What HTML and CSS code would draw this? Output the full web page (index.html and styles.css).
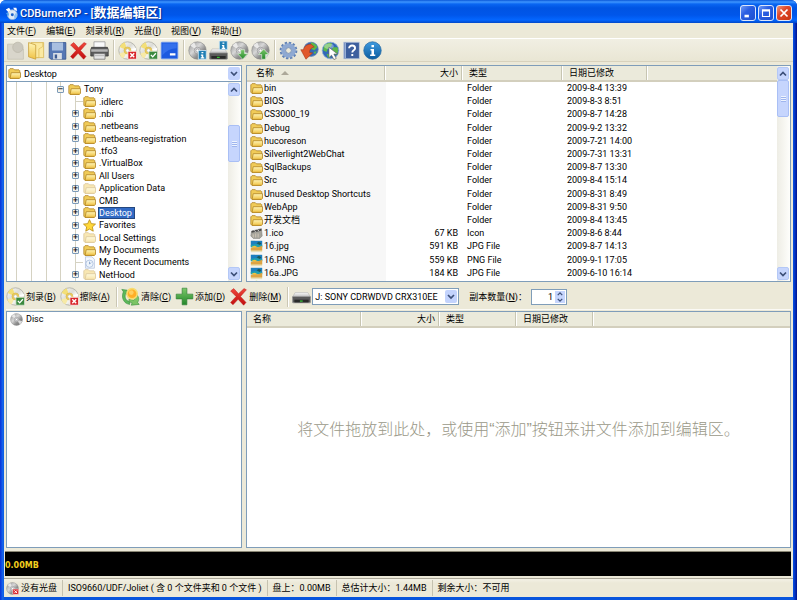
FILE: index.html
```
<!DOCTYPE html>
<html lang="zh-CN">
<head>
<meta charset="UTF-8">
<meta name="viewport" content="width=device-width, initial-scale=1.0">
<title>CDBurnerXP</title>
<link rel="stylesheet" href="styles.css">
</head>
<body>
<svg class="sprite" width="0" height="0" aria-hidden="true">
    <defs>
        <linearGradient id="g-folder" x1="0" y1="0" x2="0" y2="1"><stop offset="0" stop-color="#fff6b8"/><stop offset="1" stop-color="#f0c244"/></linearGradient>
        <linearGradient id="g-disc" x1="0" y1="0" x2="1" y2="1"><stop offset="0" stop-color="#ffffff"/><stop offset=".45" stop-color="#dcdcd6"/><stop offset=".6" stop-color="#f4f4f0"/><stop offset="1" stop-color="#c2c2ba"/></linearGradient>
        <linearGradient id="g-dark" x1="0" y1="0" x2="1" y2="1"><stop offset="0" stop-color="#8c8c8c"/><stop offset=".4" stop-color="#d8d8d8"/><stop offset=".65" stop-color="#8f8f8f"/><stop offset="1" stop-color="#6f6f6f"/></linearGradient>
        <linearGradient id="g-red" x1="0" y1="0" x2="0" y2="1"><stop offset="0" stop-color="#f0483c"/><stop offset="1" stop-color="#c00c0c"/></linearGradient>
        <linearGradient id="g-green" x1="0" y1="0" x2="0" y2="1"><stop offset="0" stop-color="#7cc96a"/><stop offset="1" stop-color="#23862a"/></linearGradient>
        <linearGradient id="g-drive" x1="0" y1="0" x2="0" y2="1"><stop offset="0" stop-color="#fafafa"/><stop offset="1" stop-color="#b5b5b5"/></linearGradient>
        <linearGradient id="g-blue" x1="0" y1="0" x2="0" y2="1"><stop offset="0" stop-color="#3f9be0"/><stop offset="1" stop-color="#0b5c9e"/></linearGradient>
    </defs>
    <symbol id="folder" viewBox="0 0 16 16">
        <path d="M1 12.500V3.500l1.500-1.500h4L8 3.500h5.500l1 1v8l-1 1.500h-11z" fill="#f0cb58" stroke="#a87c1c" stroke-width=".9"/>
        <path d="M2.500 14 4 7h11.400v5.700L14 14z" fill="url(#g-folder)" stroke="#ad801f" stroke-width=".9"/>
    </symbol>
    <symbol id="recent" viewBox="0 0 16 16">
        <path d="M3 1h8l3 3v11H3z" fill="#f4f8ff" stroke="#b5c4dc"/>
        <circle cx="8" cy="9.500" r="4.500" fill="#eef4fc" stroke="#a9bedb"/>
        <path d="M8 7v3l2-2" fill="none" stroke="#7f9cc4"/>
    </symbol>
    <symbol id="star" viewBox="0 0 16 16">
        <path d="M8 .8l2.200 4.900 5.200.6-3.900 3.500 1.100 5.200L8 12.400 3.400 15l1.100-5.200L.6 6.300l5.200-.6z" fill="#ffd83a" stroke="#b98a10"/>
    </symbol>
    <symbol id="picture" viewBox="0 0 16 16">
        <path fill="#e8e0b8" d="M1 1h14v14H1z"/>
        <path fill="#1d7fc0" d="M1 1h14v7H1z"/>
        <path fill="#1f9fb0" d="M1 6l6-1 8 1v3H1z"/>
        <path fill="#dda443" d="M1 10l4-1.500 5 .5 5-2v6H1z"/>
        <path fill="#1a5a5a" d="M8 4l3-2 3 2-2 2z"/>
        <path fill="#f0c53c" d="M2 8l4-1 3 1.500-4 1z"/>
    </symbol>
    <symbol id="clapper" viewBox="0 0 16 16">
        <path d="M2 5 14 2l1 9-3 3H4L1 11z" fill="#a5a49c" stroke="#7d7d78" stroke-width=".7"/>
        <path d="M2 5 14 2v2.500L2 7z" fill="#4a4a4a"/>
        <path d="M5 4l2 2M9 3l2 2" stroke="#eee"/>
        <path d="M4 13V9M7 13V8M10 13V8" stroke="#d8cdbb" fill="none"/>
    </symbol>
    <symbol id="disc" viewBox="0 0 24 24">
        <circle cx="12" cy="12" r="11" fill="url(#g-disc)" stroke="#a5a59c" stroke-width=".9"/>
        <path d="M12 12 2 7.500A11 11 0 0 1 8.500 1.600zM12 12l10.800 1A11 11 0 0 1 20 19.500z" fill="#f3df78"/>
        <path d="M12 12 7 22a11 11 0 0 1-5.500-6z" fill="#f7eaa6"/>
        <path d="M12 12 22.500 8.500 23 12z" fill="#fff"/>
        <circle cx="12" cy="12" r="4.400" fill="#f0cf58" stroke="#cfae4c" stroke-width=".7"/>
        <circle cx="12" cy="12" r="2.100" fill="#fff" stroke="#aaa" stroke-width=".6"/>
    </symbol>
    <symbol id="disc-dark" viewBox="0 0 24 24">
        <circle cx="12" cy="12" r="11" fill="url(#g-dark)" stroke="#888" stroke-width=".8"/>
        <path d="M12 12 3 6a11 11 0 0 1 5-4z" fill="#e9e9e9"/>
        <path d="M12 12l10.500 3a11 11 0 0 1-4 6z" fill="#dcdcdc"/>
        <circle cx="12" cy="12" r="4.200" fill="#cfcfd2" stroke="#8a8a8a" stroke-width=".7"/>
        <circle cx="12" cy="12" r="1.900" fill="#fff" stroke="#777" stroke-width=".6"/>
    </symbol>
    <symbol id="badge-x" viewBox="0 0 24 24">
        <rect x="12.500" y="13" width="11" height="10" rx="1" fill="#d8242a" stroke="#fff" stroke-width="1"/>
        <path d="M15.500 15.500l5 5m0-5-5 5" stroke="#fff" stroke-width="1.800"/>
    </symbol>
    <symbol id="badge-ok" viewBox="0 0 24 24">
        <rect x="12.500" y="13" width="11" height="10" rx="1" fill="#3b8a3f" stroke="#dfe8dc" stroke-width="1"/>
        <path d="M15 17.500l2.300 2.500 4-4.500" fill="none" stroke="#fff" stroke-width="1.700"/>
    </symbol>
    <symbol id="badge-i" viewBox="0 0 24 24">
        <rect x="13" y="12" width="10" height="11" fill="#1f7fb4" stroke="#cfe6f4" stroke-width="1"/>
        <path d="M17 14h2.400v1.600H17zM16.300 17h3v3.500h1.200V22h-4.400v-1.500h1.200v-2h-1z" fill="#fff"/>
    </symbol>
    <symbol id="new" viewBox="0 0 24 24">
        <path d="M2 4h12l8 6v13H2z" fill="#d9d6cb" stroke="#c6c2b4"/>
        <circle cx="15" cy="8" r="6.500" fill="#cbc8bd" stroke="#bdb9ab"/>
    </symbol>
    <symbol id="open" viewBox="0 0 24 24">
        <path d="M5 2h16v19H8z" fill="#fbe9a0" stroke="#d8b654"/>
        <path d="M2 2l9 3v18l-9-3z" fill="url(#g-folder)" stroke="#c99f3a"/>
        <path d="M11 21h4V10l5-3V2" fill="none" stroke="#e0c060"/>
    </symbol>
    <symbol id="save" viewBox="0 0 24 24">
        <path d="M1.500 2h21v21h-19l-2-2z" fill="#5677b4" stroke="#31508c"/>
        <path d="M5 2h14v10H5z" fill="#a9bfe0"/>
        <path d="M6.500 15h11v8h-11z" fill="#d8dde6"/>
        <path d="M8.500 17h3v5h-3z" fill="#3c5a92"/>
    </symbol>
    <symbol id="cross" viewBox="0 0 24 24">
        <path d="M2 5l4-3 6 6.500L19 2l3 1.500L14.500 12l7 7.500-3 3.500-7-7.500-6.500 7L2 19.500 9 12z" fill="url(#g-red)" stroke="#b81a1a" stroke-width=".6"/>
    </symbol>
    <symbol id="printer" viewBox="0 0 24 24">
        <path d="M5 1h14v9H5z" fill="#fafafa" stroke="#999"/>
        <path d="M2 8h20l1 3v8H1v-8z" fill="#5a5a5a" stroke="#3c3c3c"/>
        <path d="M1.500 10.500h21v3h-21z" fill="#b4b4b4"/>
        <path d="M5 16h14v7H5z" fill="#e6e6e6" stroke="#777"/>
        <path d="M6 18.500h12" stroke="#aaa"/>
    </symbol>
    <symbol id="panel" viewBox="0 0 24 24">
        <rect x="1.500" y="1.500" width="21" height="21" rx="1" fill="#1c5ae0" stroke="#6e9aee"/>
        <path d="M3 3h18v6C14 9 8 12 3 18z" fill="#3470ec"/>
        <path d="M12.500 15.500h7v2.800h-7z" fill="#fff"/>
    </symbol>
    <symbol id="drive" viewBox="0 0 24 24">
        <path d="M4 7h16l3.500 6H.5z" fill="url(#g-drive)" stroke="#aaa" stroke-width=".6"/>
        <rect x=".5" y="12" width="23" height="8" rx="1" fill="#5a5a5a" stroke="#9d9d9d"/>
        <path d="M3 16h18v3.500H3z" fill="#292929"/>
        <path d="M10 17.800h3.500" stroke="#36c436" stroke-width="1.600"/>
    </symbol>
    <symbol id="arrow-down" viewBox="0 0 24 24">
        <path d="M13.500 11h5v5h4l-6.500 7-6.500-7h4z" fill="url(#g-green)" stroke="#e8f4e2" stroke-width=".8"/>
    </symbol>
    <symbol id="arrow-up" viewBox="0 0 24 24">
        <path d="M13.500 23h5v-6h4L16 10l-6.500 7h4z" fill="url(#g-green)" stroke="#e8f4e2" stroke-width=".8"/>
    </symbol>
    <symbol id="gear" viewBox="0 0 24 24">
        <circle cx="12" cy="12" r="9.700" fill="none" stroke="#6182b5" stroke-width="3" stroke-dasharray="3.050 2.030"/>
        <circle cx="12" cy="12" r="6.500" fill="none" stroke="#8ea9d2" stroke-width="5.500"/>
        <circle cx="12" cy="12" r="3.600" fill="#ece9d8" stroke="#5c7db0"/>
    </symbol>
    <symbol id="globe" viewBox="0 0 24 24">
        <circle cx="12" cy="12" r="10.500" fill="#3268b8" stroke="#8fb0d8"/>
        <path d="M5 5c3-3 7-3 9-2l-1 4-4 2-2 5-4-2c0-3 0-5 2-7zM15 8l6 0c1 4 1 7-2 10l-4-3-1-4zM7 16l4 1 1 4-3 0z" fill="#5cb84a"/>
        <ellipse cx="10" cy="6.500" rx="6" ry="3.500" fill="#fff" opacity=".35"/>
    </symbol>
    <symbol id="update" viewBox="0 0 24 24">
        <circle cx="14" cy="10.500" r="9" fill="#3268b8" stroke="#6386b8"/>
        <path d="M14 2c4 0 7 3 8 6l-4 4-5-3zM17 14l4-1-2 4z" fill="#5cb84a"/>
        <path d="M14 4C8 4 5 7 4.500 11L1 11l6.500 12L16 15l-4-.5c0-4 2-6 6-7z" fill="#e0582a" stroke="#a43410" stroke-width=".7"/>
    </symbol>
    <symbol id="cursor" viewBox="0 0 24 24">
        <path d="M10 8l0 13 3.300-3 3 5.500 3-1.500-3-5.500h4.700z" fill="#fff" stroke="#555" stroke-width=".8"/>
    </symbol>
    <symbol id="help" viewBox="0 0 24 24">
        <path d="M2 1.500h20v21H2z" fill="#3d5f9e" stroke="#c9d3e4"/>
        <path d="M3 2.500h2v19H3z" fill="#9db3d8"/>
        <path d="M9 9.300c0-5 7.500-4.500 7.500-.3 0 2.800-3.500 2.800-3.500 5.500M13 16.500V19" fill="none" stroke="#fff" stroke-width="2.400"/>
    </symbol>
    <symbol id="info" viewBox="0 0 24 24">
        <circle cx="12" cy="12" r="11" fill="url(#g-blue)" stroke="#2a6da6"/>
        <path d="M10.700 5h3.200v2.800h-3.200zM9.500 10h4.400v7h1.600v2H9v-2h1.700v-5H9.500z" fill="#fff"/>
    </symbol>
    <symbol id="clear" viewBox="0 0 24 24">
        <path d="M1 3l7 1v6l-2-2c-2 5 0 9 5 11v3C3 21 0 13 3 6z" fill="#5cb85a" stroke="#2f8a39" stroke-width=".7"/>
        <path d="M23 22l-10 1 1-3-4-1.500v-3l6 1c3-2 4-4 4-7 3 4 3 7 1 10z" fill="#7cc465" stroke="#2f8a39" stroke-width=".7"/>
        <circle cx="14" cy="8.500" r="6.500" fill="#ffae26" stroke="#f7dc70" stroke-width="2"/>
        <circle cx="13" cy="7" r="3" fill="#ffcf60"/>
    </symbol>
    <symbol id="plus" viewBox="0 0 24 24">
        <path d="M9 1.500h6V9h7.500v6H15v7.500H9V15H1.500V9H9z" fill="url(#g-green)" stroke="#2e7d32" stroke-width=".8"/>
    </symbol>
    <symbol id="app" viewBox="0 0 16 16">
        <circle cx="9" cy="9.500" r="6" fill="#dfeaf6" stroke="#93b4da"/>
        <circle cx="9" cy="9.500" r="1.800" fill="#1d63c8"/>
        <path d="M1 3l4-2 2 3-3 2zM10 1l4 0 1 4-3-1z" fill="#fff"/>
        <path d="M1 7l4 1-1 4z" fill="#4aa0f0"/>
        <path d="M11 11l3-5 1 5-3 4z" fill="#8fc2f4"/>
    </symbol>
    <symbol id="chev-down" viewBox="0 0 8 8"><path d="M1 2.500l3 3 3-3" fill="none" stroke="#3c4f78" stroke-width="1.700"/></symbol>
    <symbol id="chev-up" viewBox="0 0 8 8"><path d="M1 5.500l3-3 3 3" fill="none" stroke="#3c4f78" stroke-width="1.700"/></symbol>
</svg>

<div class="window">
    <header class="titlebar">
        <svg class="app-icon"><use href="#app"/></svg>
        <h1>CDBurnerXP - [<span class="title-cjk">数据编辑区</span>]</h1>
        <button class="win-btn" aria-label="最小化"><svg viewBox="0 0 16 16"><path d="M4 10h5v3H4z" fill="#fff"/></svg></button>
        <button class="win-btn" aria-label="最大化"><svg viewBox="0 0 16 16"><path d="M4 4.500h8v7.500H4zM4 5.500h8" fill="none" stroke="#fff" stroke-width="1.300"/></svg></button>
        <button class="win-btn close" aria-label="关闭"><svg viewBox="0 0 16 16"><path d="M4 4l8 8m0-8-8 8" stroke="#fff" stroke-width="2"/></svg></button>
    </header>

    <nav class="menu">
        <button>文件(<u>F</u>)</button>
        <button>编辑(<u>E</u>)</button>
        <button>刻录机(<u>R</u>)</button>
        <button>光盘(<u>I</u>)</button>
        <button>视图(<u>V</u>)</button>
        <button>帮助(<u>H</u>)</button>
    </nav>

    <div class="toolbar" role="toolbar">
        <button aria-label="新建" disabled><svg><use href="#new"/></svg></button>
        <button aria-label="打开"><svg><use href="#open"/></svg></button>
        <button aria-label="保存"><svg><use href="#save"/></svg></button>
        <button aria-label="删除"><svg><use href="#cross"/></svg></button>
        <button aria-label="打印"><svg><use href="#printer"/></svg></button>
        <span class="sep"></span>
        <button aria-label="擦除光盘"><svg><use href="#disc"/><use href="#badge-x"/></svg></button>
        <button aria-label="刻录光盘"><svg><use href="#disc"/><use href="#badge-ok"/></svg></button>
        <button aria-label="面板"><svg><use href="#panel"/></svg></button>
        <span class="sep"></span>
        <button aria-label="光盘信息"><svg><use href="#disc-dark"/><use href="#badge-i"/></svg></button>
        <button aria-label="驱动器信息"><svg viewBox="0 0 24 24"><use href="#drive" y="3"/><use href="#badge-i" y="-12"/></svg></button>
        <button aria-label="导入"><svg><use href="#disc-dark"/><use href="#arrow-down"/></svg></button>
        <button aria-label="导出"><svg><use href="#disc-dark"/><use href="#arrow-up"/></svg></button>
        <span class="sep"></span>
        <button aria-label="选项"><svg><use href="#gear"/></svg></button>
        <button aria-label="更新"><svg><use href="#update"/></svg></button>
        <button aria-label="网站"><svg><use href="#globe"/><use href="#cursor"/></svg></button>
        <button aria-label="帮助"><svg><use href="#help"/></svg></button>
        <button aria-label="关于"><svg><use href="#info"/></svg></button>
    </div>

    <main>
        <section class="panes explorer">
            <div class="left">
                <div class="combo path">
                    <svg class="combo-icon"><use href="#folder"/></svg>
                    <select aria-label="位置"><option>Desktop</option></select>
                    <svg class="combo-arrow"><use href="#chev-down"/></svg>
                </div>
                <div class="tree-box">
                    <ul class="tree" role="tree">
                        <li class="root" role="treeitem"><button class="exp" aria-label="折叠">&#8722;</button><svg><use href="#folder"/></svg><span>Tony</span></li>
                        <li class="leaf" role="treeitem"><svg><use href="#folder"/></svg><span>.idlerc</span></li>
                        <li role="treeitem"><button class="exp" aria-label="展开">+</button><svg><use href="#folder"/></svg><span>.nbi</span></li>
                        <li role="treeitem"><button class="exp" aria-label="展开">+</button><svg><use href="#folder"/></svg><span>.netbeans</span></li>
                        <li role="treeitem"><button class="exp" aria-label="展开">+</button><svg><use href="#folder"/></svg><span>.netbeans-registration</span></li>
                        <li role="treeitem"><button class="exp" aria-label="展开">+</button><svg><use href="#folder"/></svg><span>.tfo3</span></li>
                        <li role="treeitem"><button class="exp" aria-label="展开">+</button><svg><use href="#folder"/></svg><span>.VirtualBox</span></li>
                        <li role="treeitem"><button class="exp" aria-label="展开">+</button><svg><use href="#folder"/></svg><span>All Users</span></li>
                        <li class="faded" role="treeitem"><button class="exp" aria-label="展开">+</button><svg><use href="#folder"/></svg><span>Application Data</span></li>
                        <li role="treeitem"><button class="exp" aria-label="展开">+</button><svg><use href="#folder"/></svg><span>CMB</span></li>
                        <li class="selected" role="treeitem"><button class="exp" aria-label="展开">+</button><svg><use href="#folder"/></svg><span>Desktop</span></li>
                        <li role="treeitem"><button class="exp" aria-label="展开">+</button><svg><use href="#star"/></svg><span>Favorites</span></li>
                        <li class="faded" role="treeitem"><button class="exp" aria-label="展开">+</button><svg><use href="#folder"/></svg><span>Local Settings</span></li>
                        <li role="treeitem"><button class="exp" aria-label="展开">+</button><svg><use href="#folder"/></svg><span>My Documents</span></li>
                        <li class="leaf" role="treeitem"><svg><use href="#recent"/></svg><span>My Recent Documents</span></li>
                        <li class="faded" role="treeitem"><button class="exp" aria-label="展开">+</button><svg><use href="#folder"/></svg><span>NetHood</span></li>
                    </ul>
                    <div class="scrollbar tree-scroll">
                        <button aria-label="向上"><svg><use href="#chev-up"/></svg></button>
                        <div class="track"><div class="thumb"></div></div>
                        <button aria-label="向下"><svg><use href="#chev-down"/></svg></button>
                    </div>
                </div>
            </div>
            <div class="box list-box">
                <div class="list-view">
                    <table class="files">
                        <colgroup><col class="c-name"><col class="c-size"><col class="c-type"><col class="c-date"><col></colgroup>
                        <thead><tr><th>名称<i class="sort"></i></th><th class="num">大小</th><th>类型</th><th>日期已修改</th><th></th></tr></thead>
                        <tbody>
                            <tr><td><svg><use href="#folder"/></svg>bin</td><td></td><td>Folder</td><td>2009-8-4 13:39</td><td></td></tr>
                            <tr><td><svg><use href="#folder"/></svg>BIOS</td><td></td><td>Folder</td><td>2009-8-3 8:51</td><td></td></tr>
                            <tr><td><svg><use href="#folder"/></svg>CS3000_19</td><td></td><td>Folder</td><td>2009-8-7 14:28</td><td></td></tr>
                            <tr><td><svg><use href="#folder"/></svg>Debug</td><td></td><td>Folder</td><td>2009-9-2 13:32</td><td></td></tr>
                            <tr><td><svg><use href="#folder"/></svg>hucoreson</td><td></td><td>Folder</td><td>2009-7-21 14:00</td><td></td></tr>
                            <tr><td><svg><use href="#folder"/></svg>Silverlight2WebChat</td><td></td><td>Folder</td><td>2009-7-31 13:31</td><td></td></tr>
                            <tr><td><svg><use href="#folder"/></svg>SqlBackups</td><td></td><td>Folder</td><td>2009-8-7 13:30</td><td></td></tr>
                            <tr><td><svg><use href="#folder"/></svg>Src</td><td></td><td>Folder</td><td>2009-8-4 15:14</td><td></td></tr>
                            <tr><td><svg><use href="#folder"/></svg>Unused Desktop Shortcuts</td><td></td><td>Folder</td><td>2009-8-31 8:49</td><td></td></tr>
                            <tr><td><svg><use href="#folder"/></svg>WebApp</td><td></td><td>Folder</td><td>2009-8-31 9:50</td><td></td></tr>
                            <tr><td><svg><use href="#folder"/></svg>开发文档</td><td></td><td>Folder</td><td>2009-8-4 13:45</td><td></td></tr>
                            <tr><td><svg><use href="#clapper"/></svg>1.ico</td><td class="num">67 KB</td><td>Icon</td><td>2009-8-6 8:44</td><td></td></tr>
                            <tr><td><svg><use href="#picture"/></svg>16.jpg</td><td class="num">591 KB</td><td>JPG File</td><td>2009-8-7 14:13</td><td></td></tr>
                            <tr><td><svg><use href="#picture"/></svg>16.PNG</td><td class="num">559 KB</td><td>PNG File</td><td>2009-9-1 17:05</td><td></td></tr>
                            <tr><td><svg><use href="#picture"/></svg>16a.JPG</td><td class="num">184 KB</td><td>JPG File</td><td>2009-6-10 16:14</td><td></td></tr>
                            <tr><td><svg viewBox="0 0 16 16"><circle cx="8" cy="7" r="6" fill="#c8e03a"/></svg></td><td></td><td></td><td></td><td></td></tr>
                        </tbody>
                    </table>
                </div>
                <div class="scrollbar list-scroll">
                    <button aria-label="向上"><svg><use href="#chev-up"/></svg></button>
                    <div class="track"><div class="thumb"></div></div>
                    <button aria-label="向下"><svg><use href="#chev-down"/></svg></button>
                </div>
            </div>
        </section>

        <div class="actions" role="toolbar">
            <button><svg><use href="#disc"/><use href="#badge-ok"/></svg>刻录(<u>B</u>)</button>
            <button><svg><use href="#disc"/><use href="#badge-x"/></svg>擦除(<u>A</u>)</button>
            <span class="sep"></span>
            <button><svg><use href="#clear"/></svg>清除(<u>C</u>)</button>
            <button><svg><use href="#plus"/></svg>添加(<u>D</u>)</button>
            <button><svg><use href="#cross"/></svg>删除(<u>M</u>)</button>
            <span class="sep"></span>
            <svg class="drive-icon"><use href="#drive"/></svg>
            <div class="combo drive">
                <select aria-label="驱动器"><option>J: SONY CDRWDVD CRX310EE</option></select>
                <svg class="combo-arrow"><use href="#chev-down"/></svg>
            </div>
            <label for="copies">副本数量(<u>N</u>)：</label>
            <div class="spinner">
                <input type="number" id="copies" min="1" value="1">
                <div class="spin-btns">
                    <button aria-label="增加"><svg><use href="#chev-up"/></svg></button>
                    <button aria-label="减少"><svg><use href="#chev-down"/></svg></button>
                </div>
            </div>
        </div>

        <section class="panes compilation">
            <div class="box disc-tree"><svg><use href="#disc-dark"/></svg>Disc</div>
            <div class="box drop">
                <table class="files small-cols">
                    <colgroup><col class="c-name"><col class="c-size"><col class="c-type"><col class="c-date"><col></colgroup>
                    <thead><tr><th>名称</th><th class="num">大小</th><th>类型</th><th>日期已修改</th><th></th></tr></thead>
                </table>
                <p class="hint">将文件拖放到此处，或使用“添加”按钮来讲文件添加到编辑区。</p>
            </div>
        </section>

        <div class="capacity">0.00MB</div>
    </main>

    <footer class="status">
        <div><svg><use href="#disc-dark"/><use href="#badge-x"/></svg>没有光盘</div>
        <div>ISO9660/UDF/Joliet ( 含 0 个文件夹和 0 个文件 )</div>
        <div>盘上：0.00MB</div>
        <div>总估计大小：1.44MB</div>
        <div>剩余大小：不可用</div>
    </footer>
</div>
</body>
</html>
```

FILE: styles.css
```
* {
    box-sizing: border-box;
}

body {
    margin: 0;
    background-color: #fff;
    color: #000;
    font-family: Roboto, "Noto Sans CJK SC", sans-serif;
    font-size: 9px;
    line-height: 12px;
}

button,
select,
input {
    margin: 0;
    padding: 0;
    border: none;
    background: none;
    color: inherit;
    font: inherit;
}

.sprite {
    position: absolute;
}

.window {
    display: flex;
    flex-direction: column;
    height: 100vh;
    min-height: 480px;
    padding: 0 4px 3px;
    background: linear-gradient(to right, #0831d9, #166aee 3px, #0855dd 4px, #0855dd calc(100% - 4px), #0441d8 calc(100% - 3px), #00138c);
    border-radius: 6px 6px 0 0;
    overflow: hidden;
}

/* title bar */
.titlebar {
    display: flex;
    align-items: center;
    gap: 2px;
    flex: none;
    height: 23px;
    margin: 0 -4px;
    padding: 3px 5px 0;
    background: linear-gradient(#0a57d8, #3e95ff 2px, #0a66f2 4px, #0054e3 8px, #0056ea 15px, #0366ff 20px, #0148c8);
}

.titlebar h1 {
    flex: 1;
    margin: 0;
    color: #fff;
    font-size: 11px;
    font-weight: 500;
    line-height: 16px;
    text-shadow: 1px 1px 1px #0a2f8c;
}

.title-cjk {
    font-size: 13px;
    font-weight: bold;
}

.app-icon {
    width: 13px;
    height: 13px;
}

.win-btn {
    width: 16px;
    height: 16px;
    border: 1px solid #dce6fb;
    border-radius: 3px;
    background: linear-gradient(135deg, #6f9af6, #2a5ee2 40%, #1f50d0);
}

.win-btn svg {
    display: block;
    width: 14px;
    height: 14px;
}

.win-btn.close {
    background: linear-gradient(135deg, #f0967a, #e0492a 40%, #c83412);
}

/* menu and toolbars */
.menu {
    display: flex;
    gap: 10px;
    flex: none;
    height: 16px;
    padding: 0 3px;
    border-bottom: 1px solid #fff;
    background-color: #ece9d8;
}

.toolbar {
    display: flex;
    align-items: center;
    flex: none;
    height: 23px;
    padding-left: 2px;
    border-bottom: 1px solid #d8d2bd;
    background: linear-gradient(#f1efe3, #e9e6d4);
}

.toolbar button {
    width: 21px;
    height: 20px;
}

.toolbar svg,
.actions button > svg,
.drive-icon {
    display: block;
    width: 19px;
    height: 19px;
}

.sep {
    flex: none;
    width: 2px;
    height: 20px;
    margin: 0 3px 0 2px;
    border-left: 1px solid #cbc7b4;
    border-right: 1px solid #fff;
}

main {
    display: flex;
    flex-direction: column;
    flex: 1;
    min-height: 0;
    padding: 3px 2px 0;
    background-color: #ece9d8;
}

.panes {
    display: grid;
    grid-template-columns: 236px 1fr;
    gap: 4px;
}

.explorer {
    flex: none;
    height: 217px;
}

.compilation {
    flex: 1;
    min-height: 0;
}

.box,
.tree-box {
    border: 1px solid #7f9db9;
    background-color: #fff;
    overflow: hidden;
}

.left {
    display: flex;
    flex-direction: column;
    min-height: 0;
}

/* combo boxes */
.combo {
    position: relative;
    flex: none;
}

.combo select {
    display: block;
    width: 100%;
    height: 17px;
    padding: 0 14px 0 2px;
    border: 1px solid #7f9db9;
    background-color: #fff;
    appearance: none;
}

.path select {
    padding-left: 17px;
}

.combo-icon {
    position: absolute;
    top: 2px;
    left: 2px;
    width: 13px;
    height: 13px;
}

.combo-arrow {
    position: absolute;
    top: 2px;
    right: 2px;
    width: 12px;
    height: 13px;
    padding: 2px;
    border-radius: 2px;
    background-color: #c3d3fd;
    pointer-events: none;
}

/* folder tree */
.tree-box {
    display: flex;
    flex: 1;
    min-height: 0;
    border-top: none;
}

.tree {
    display: grid;
    grid-auto-rows: 1fr;
    flex: 1;
    margin: 0;
    padding: 1px 0 0;
    list-style: none;
    background:
        linear-gradient(#d5d2c2, #d5d2c2) 9px 0 / 1px 100% no-repeat,
        linear-gradient(#d5d2c2, #d5d2c2) 24px 0 / 1px 100% no-repeat,
        linear-gradient(#d5d2c2, #d5d2c2) 39px 0 / 1px 100% no-repeat,
        linear-gradient(#d5d2c2, #d5d2c2) 53px 0 / 1px 100% no-repeat,
        linear-gradient(#d5d2c2, #d5d2c2) 68px 14px / 1px 100% no-repeat;
}

.tree li {
    display: flex;
    align-items: center;
    min-height: 0;
    padding-left: 65px;
}

.tree li.root {
    padding-left: 50px;
}

.tree li.leaf {
    padding-left: 76px;
    background: linear-gradient(#d5d2c2, #d5d2c2) 69px 50% / 7px 1px no-repeat;
}

.tree svg {
    width: 13px;
    height: 13px;
    margin-right: 2px;
}

.tree span {
    padding: 0 1px;
    line-height: 12px;
}

.faded svg {
    opacity: .45;
}

.selected span {
    padding-right: 3px;
    background-color: #316ac5;
    color: #fff;
    outline: 1px solid #24477e;
    outline-offset: -1px;
}

.exp {
    display: flex;
    align-items: center;
    justify-content: center;
    width: 7px;
    height: 7px;
    margin-right: 4px;
    border: 1px solid #7b9ab8;
    border-radius: 1px;
    background-color: #f4f2ea;
    font-family: "DejaVu Sans", sans-serif;
    font-size: 7px;
    font-weight: bold;
    line-height: 5px;
}

/* scrollbars */
.scrollbar {
    display: flex;
    flex-direction: column;
    flex: none;
    width: 13px;
    padding: 1px 0;
    background: linear-gradient(to right, #eeede5, #fefefb);
}

.scrollbar button {
    flex: none;
    width: 12px;
    height: 13px;
    border: 1px solid #b4c8f6;
    border-radius: 2px;
    background-color: #c6d5fd;
}

.scrollbar svg {
    display: block;
    width: 8px;
    height: 8px;
    margin: 0 auto;
}

.track {
    flex: 1;
}

.thumb {
    width: 12px;
    height: 37px;
    border: 1px solid #a9bff5;
    border-radius: 2px;
    background:
        repeating-linear-gradient(#eef4fe 0 1px, #9fb5ee 1px 2px) center / 5px 6px no-repeat,
        #c6d5fd;
}

.tree-scroll .thumb {
    margin-top: 29px;
}

/* file lists */
.list-box {
    display: flex;
}

.list-view {
    flex: 1;
    min-width: 0;
    overflow: hidden;
}

.files {
    width: 100%;
    border-collapse: separate;
    border-spacing: 0;
    table-layout: fixed;
}

.list-view .files {
    height: 227px;
}

.c-name { width: 139px; }
.c-size { width: 77px; }
.c-type { width: 100px; }
.c-date { width: 85px; }

.small-cols .c-name { width: 115px; }
.small-cols .c-size { width: 78px; }
.small-cols .c-type { width: 77px; }
.small-cols .c-date { width: 77px; }

.files th {
    height: 16px;
    padding: 0 4px 0 6px;
    border-bottom: 2px solid #d3cfbd;
    background: linear-gradient(to left, #fff 1px, #c7c5b2 1px 2px, #ebeadb 2px);
    font-weight: normal;
    line-height: 13px;
    text-align: left;
    white-space: nowrap;
}

.files th:first-child {
    padding-left: 9px;
}

.small-cols th:first-child {
    padding-left: 6px;
}

.files th:last-child {
    background: #ebeadb;
}

.files td {
    padding: 0 0 0 4px;
    line-height: 13px;
    white-space: nowrap;
}

.files .num {
    padding-right: 5px;
    text-align: right;
}

.files td:first-child {
    padding-left: 3px;
    background-color: #f7f7f7;
}

.files td svg {
    display: inline-block;
    width: 13px;
    height: 13px;
    margin-right: 1px;
    vertical-align: top;
}

.sort {
    display: inline-block;
    margin-left: 7px;
    border: 4px solid transparent;
    border-top: none;
    border-bottom: 4px solid #aca899;
    vertical-align: 1px;
}

/* middle bar */
.actions {
    display: flex;
    align-items: center;
    flex: none;
    height: 26px;
    margin: 2px 0 1px;
    border-bottom: 1px solid #fbfaf5;
    white-space: nowrap;
}

.actions button {
    display: flex;
    align-items: center;
    margin-right: 4px;
}

.actions button > svg,
.actions .drive-icon {
    margin-right: 1px;
}

.drive {
    width: 147px;
}

.actions label {
    margin-left: 10px;
}

.spinner {
    display: flex;
    width: 36px;
    height: 16px;
    margin-left: 4px;
    padding: 1px;
    border: 1px solid #7f9db9;
    background-color: #fff;
}

.spinner input {
    flex: 1;
    min-width: 0;
    text-align: right;
    appearance: textfield;
    outline: none;
}

.spinner input::-webkit-inner-spin-button {
    display: none;
}

.spin-btns {
    display: grid;
    grid-template-rows: 1fr 1fr;
    width: 10px;
    margin-left: 2px;
}

.spin-btns button {
    justify-content: center;
    margin: 0;
    background-color: #c6d5fd;
}

.spin-btns button > svg {
    width: 6px;
    height: 6px;
    margin: 0;
}

/* compilation */
.disc-tree {
    display: flex;
    align-items: flex-start;
    padding: 1px 3px;
    line-height: 13px;
}

.disc-tree svg {
    width: 13px;
    height: 13px;
    margin-right: 3px;
}

.drop {
    display: flex;
    flex-direction: column;
}

.hint {
    margin: auto;
    padding-bottom: 16px;
    color: #9a9888;
    font-family: "Liberation Sans", "Noto Sans CJK SC", sans-serif;
    font-size: 16px;
    font-weight: 300;
    line-height: 20px;
    white-space: nowrap;
}

.capacity {
    flex: none;
    height: 25px;
    margin: 3px 0 2px -1px;
    padding-top: 8px;
    border-top: 1px solid #8a8775;
    background-color: #000;
    color: #f2cf1f;
    font-family: "DejaVu Sans", sans-serif;
    font-size: 8px;
    font-weight: bold;
}

.status {
    display: flex;
    flex: none;
    height: 19px;
    padding: 1px 2px;
    border-top: 1px solid #aca899;
    background: linear-gradient(#f3f1e6, #ece9d8 4px);
    line-height: 17px;
    white-space: nowrap;
}

.status div {
    display: flex;
    align-items: center;
    gap: 2px;
    padding: 0 5px;
    border-right: 1px solid #c5c2b0;
}

.status div:first-child {
    padding-left: 0;
}

.status div:last-child {
    border-right: none;
}

.status svg {
    width: 13px;
    height: 13px;
}
```
